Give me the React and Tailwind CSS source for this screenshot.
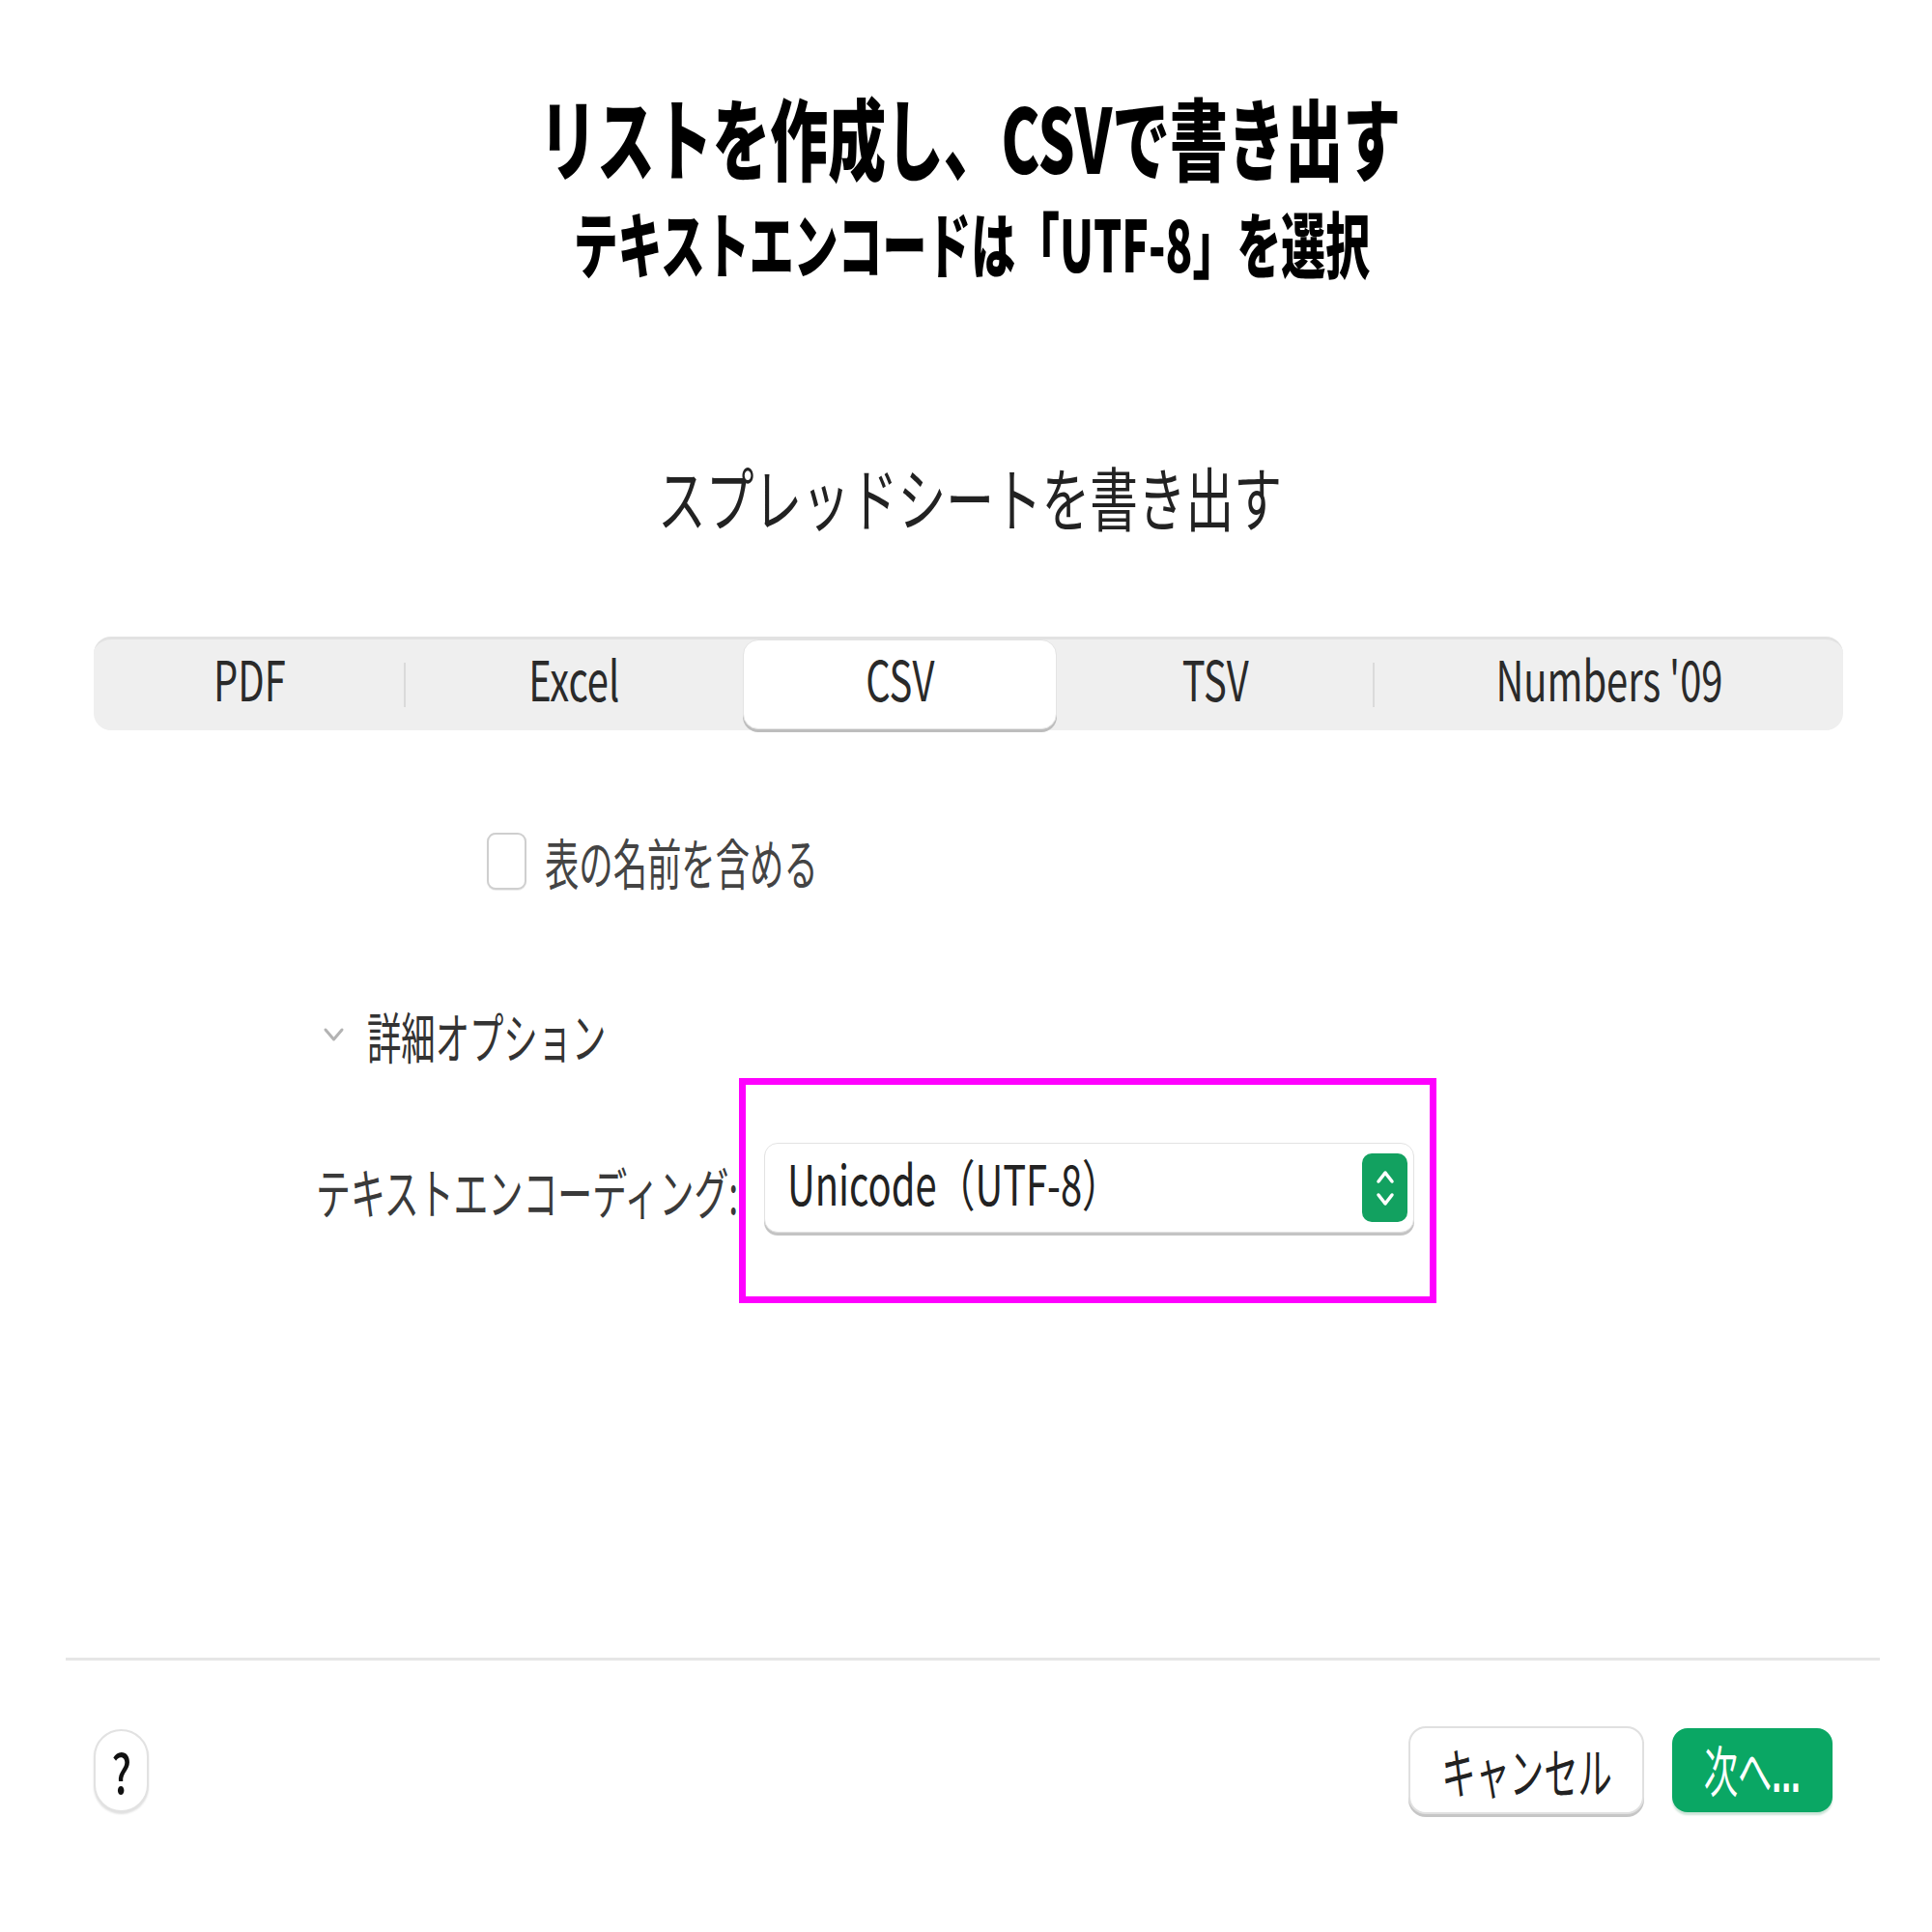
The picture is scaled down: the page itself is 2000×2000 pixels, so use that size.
import React from "react";

// squeezed text, the screenshot is horizontally compressed
const SQ = "inline-block scale-x-[0.62] whitespace-nowrap";
const SQL = "inline-block origin-left scale-x-[0.62] whitespace-nowrap";

const tabs = [
  { label: "PDF", w: "w-[323px]" },
  { label: "Excel", w: "w-[349px]" },
  { label: "CSV", w: "w-[325px]", active: true },
  { label: "TSV", w: "w-[329px]" },
  { label: "Numbers '09", w: "w-[485px]" },
];

function Stepper() {
  return (
    <div className="w-[47px] h-[71px] rounded-[10px] bg-[#12a160] flex items-center justify-center">
      <svg width="24" height="50" viewBox="0 0 24 50" fill="none">
        <path d="M5 18 L12 9 L19 18" stroke="white" strokeWidth="3.5" strokeLinecap="round" strokeLinejoin="round" />
        <path d="M5 32 L12 41 L19 32" stroke="white" strokeWidth="3.5" strokeLinecap="round" strokeLinejoin="round" />
      </svg>
    </div>
  );
}

export default function App() {
  return (
    <div
      className="w-[2000px] h-[2000px] bg-white flex flex-col text-[#2b2b2b]"
      style={{ fontFamily: '"Noto Sans CJK JP", "Noto Sans", sans-serif' }}
    >
      {/* Heading */}
      <div className="mt-[94px] pl-[8px] text-center text-[92px] leading-none font-black text-black">
        <span className="inline-block scale-x-[0.65] whitespace-nowrap">リストを作成し、CSVで書き出す</span>
      </div>
      <div className="mt-[27px] pl-[12px] text-center text-[74px] leading-none font-black text-black">
        <span className="inline-block scale-x-[0.62] whitespace-nowrap">テキストエンコードは「UTF-8」を選択</span>
      </div>

      {/* Dialog title */}
      <div className="mt-[190px] pl-[8px] text-center text-[72px] leading-none text-[#222]">
        <span className="inline-block scale-x-[0.69] whitespace-nowrap">スプレッドシートを書き出す</span>
      </div>

      {/* Segmented control */}
      <div className="mt-[110px] ml-[97px] w-[1811px] h-[97px] rounded-[18px] bg-[#efefef] border-t-[3px] border-[#e2e2e2] flex items-center">
        {tabs.map((t, i) => {
          const next = tabs[i + 1];
          const divider = next && !t.active && !next.active;
          return (
            <div key={t.label} className={`${t.w} h-full relative flex items-center justify-center pb-[16px]`}>
              {t.active ? (
                <div className="absolute inset-x-0 top-0 bottom-[1px] rounded-[16px] bg-white border border-[#e4e4e4] shadow-[0_3px_0_#bdbdbd]" />
              ) : null}
              <span className="relative inline-block scale-x-[0.7] whitespace-nowrap text-[57px] leading-none text-[#2a2a2a]">
                {t.label}
              </span>
              {divider && <div className="absolute right-0 top-[24px] w-[2px] h-[46px] bg-[#dadada]" />}
            </div>
          );
        })}
      </div>

      {/* Include table name */}
      <div className="mt-[106px] ml-[504px] h-[59px] flex items-center">
        <div className="w-[41px] h-[59px] rounded-[9px] border-[2px] border-[#cfcfcf] bg-white shadow-[0_1px_1px_rgba(0,0,0,0.08)]" />
        <div className="ml-[19px] text-[57px] leading-none text-[#444]">
          <span className={SQL}>表の名前を含める</span>
        </div>
      </div>

      {/* Advanced options */}
      <div className="mt-[124px] ml-[334px] h-[52px] flex items-center">
        <svg width="23" height="20" viewBox="0 0 23 20" fill="none">
          <path d="M3 5 L11.5 15 L20 5" stroke="#b3b3b3" strokeWidth="3" strokeLinecap="round" strokeLinejoin="round" />
        </svg>
        <div className="ml-[23px] text-[57px] leading-none text-[#333]">
          <span className={SQL}>詳細オプション</span>
        </div>
      </div>

      {/* Encoding */}
      <div className="mt-[19px] ml-[327px] flex items-center">
        <div className="w-[438px] text-[57px] leading-none text-[#3a3a3a]">
          <span className="inline-block origin-left scale-x-[0.63] whitespace-nowrap">テキストエンコーディング:</span>
        </div>
        <div className="w-[722px] h-[233px] border-[7px] border-[#ff00ff] flex items-center pl-[19px] pb-[6px]">
          <div className="w-[673px] h-[93px] rounded-[14px] bg-white border border-[#e3e3e3] shadow-[0_3px_0_#c4c4c4] flex items-center justify-between pl-[23px] pr-[6px]">
            <div className="text-[57px] leading-none text-[#222] pb-[12px]">
              <span className="inline-block origin-left scale-x-[0.7] whitespace-nowrap">Unicode（UTF-8）</span>
            </div>
            <Stepper />
          </div>
        </div>
      </div>

      {/* Divider */}
      <div className="mt-[367px] ml-[68px] w-[1878px] h-[3px] bg-[#e6e6e6]" />

      {/* Footer buttons */}
      <div className="mt-[68px] pl-[97px] pr-[103px] flex items-center justify-between">
        <div className="w-[57px] h-[86px] rounded-full bg-white border-[2px] border-[#e2e2e2] shadow-[0_2px_2px_rgba(0,0,0,0.12)] flex items-center justify-center">
          <span className="inline-block scale-x-[0.75] text-[56px] leading-none font-medium text-[#111]">?</span>
        </div>
        <div className="flex items-center gap-[29px]">
          <div className="w-[244px] h-[91px] rounded-[18px] bg-white border-[2px] border-[#e0e0e0] shadow-[0_3px_0_#c6c6c6] flex items-center justify-center">
            <span className={`${SQ} text-[57px] leading-none text-[#222]`}>キャンセル</span>
          </div>
          <div className="w-[166px] h-[87px] rounded-[16px] bg-[#0aa764] shadow-[0_3px_2px_rgba(0,120,60,0.2)] flex items-center justify-center">
            <span className={`${SQ} text-[57px] leading-none text-white`}>
              次へ<span style={{ fontFamily: '"Liberation Sans", sans-serif' }} className="font-bold">...</span>
            </span>
          </div>
        </div>
      </div>
    </div>
  );
}
